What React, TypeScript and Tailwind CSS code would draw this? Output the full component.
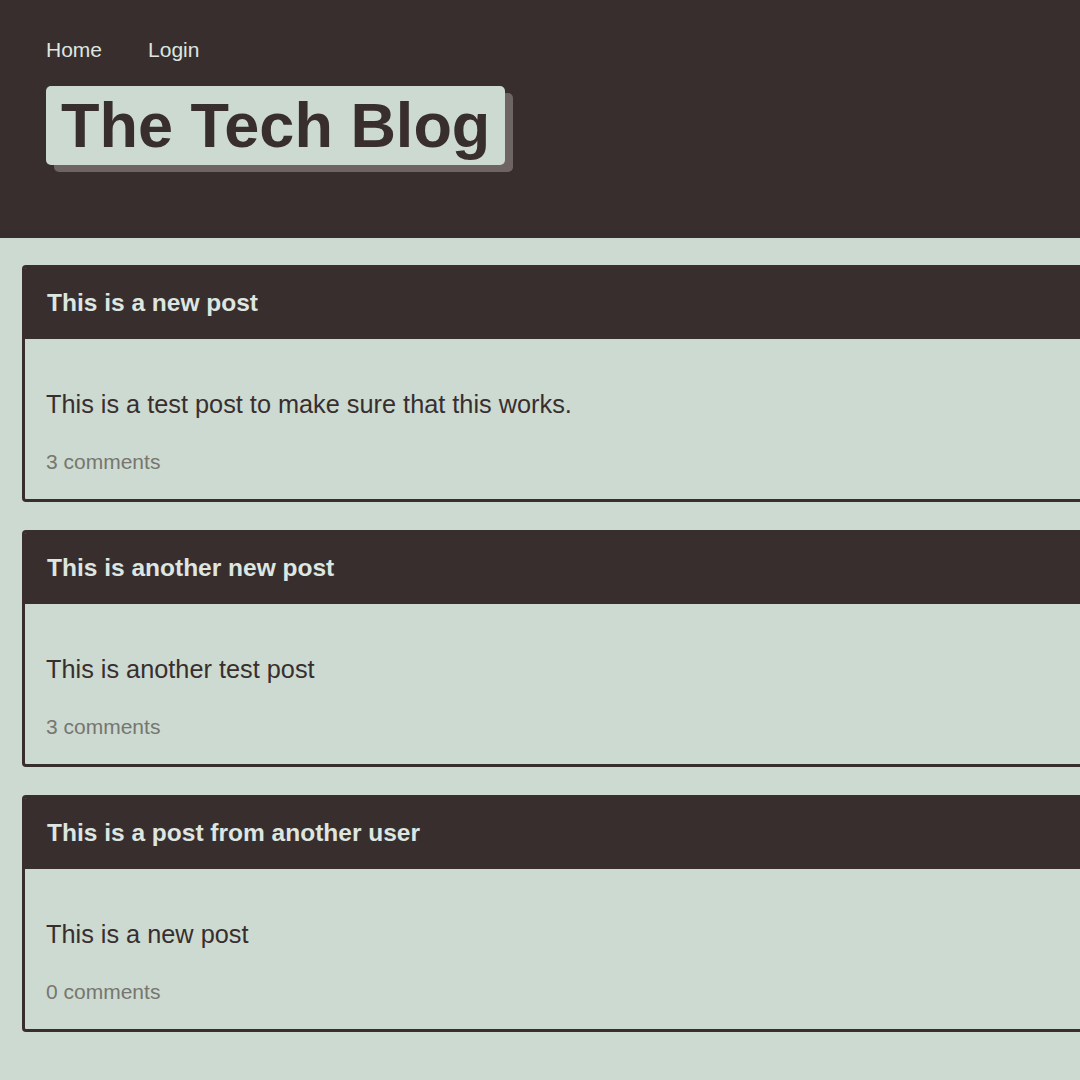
const posts = [
  { title: 'This is a new post', body: 'This is a test post to make sure that this works.', comments: 3 },
  { title: 'This is another new post', body: 'This is another test post', comments: 3 },
  { title: 'This is a post from another user', body: 'This is a new post', comments: 0 },
]

export default function App() {
  return (
    <div className="min-h-[1080px] w-[1080px] overflow-hidden bg-[#ccdad1] font-['Liberation_Sans',Arial,sans-serif]">
      <header className="h-[238px] bg-[#392e2e] pl-[46px] pt-[36px]">
        <nav className="flex gap-[46px] text-[21px] leading-[28px] text-[#dde6e0]">
          <a href="#">Home</a>
          <a href="#">Login</a>
        </nav>
        <div className="mt-[22px] inline-block">
          <h1 className="rounded-[5px] bg-[#ccdad1] px-[15px] text-[63px] font-bold leading-[79px] text-[#392e2e] shadow-[8px_7px_0_#6e6464]">
            The Tech Blog
          </h1>
        </div>
      </header>

      <main className="flex flex-col gap-[28px] pl-[22px] pt-[27px]">
        {posts.map((post) => (
          <article
            key={post.title}
            className="h-[237px] w-[1120px] overflow-hidden rounded-[4px] border-[3px] border-[#392e2e]"
          >
            <div className="flex h-[71px] items-center bg-[#392e2e] pl-[22px]">
              <h2 className="text-[24.5px] font-bold text-[#dde6e0]">{post.title}</h2>
            </div>
            <div className="pl-[21px] pt-[50px]">
              <p className="text-[25.3px] leading-[30px] text-[#392e2e]">{post.body}</p>
              <p className="mt-[31px] text-[21px] leading-[24px] text-[#77766f]">
                {post.comments} comments
              </p>
            </div>
          </article>
        ))}
      </main>
    </div>
  )
}
